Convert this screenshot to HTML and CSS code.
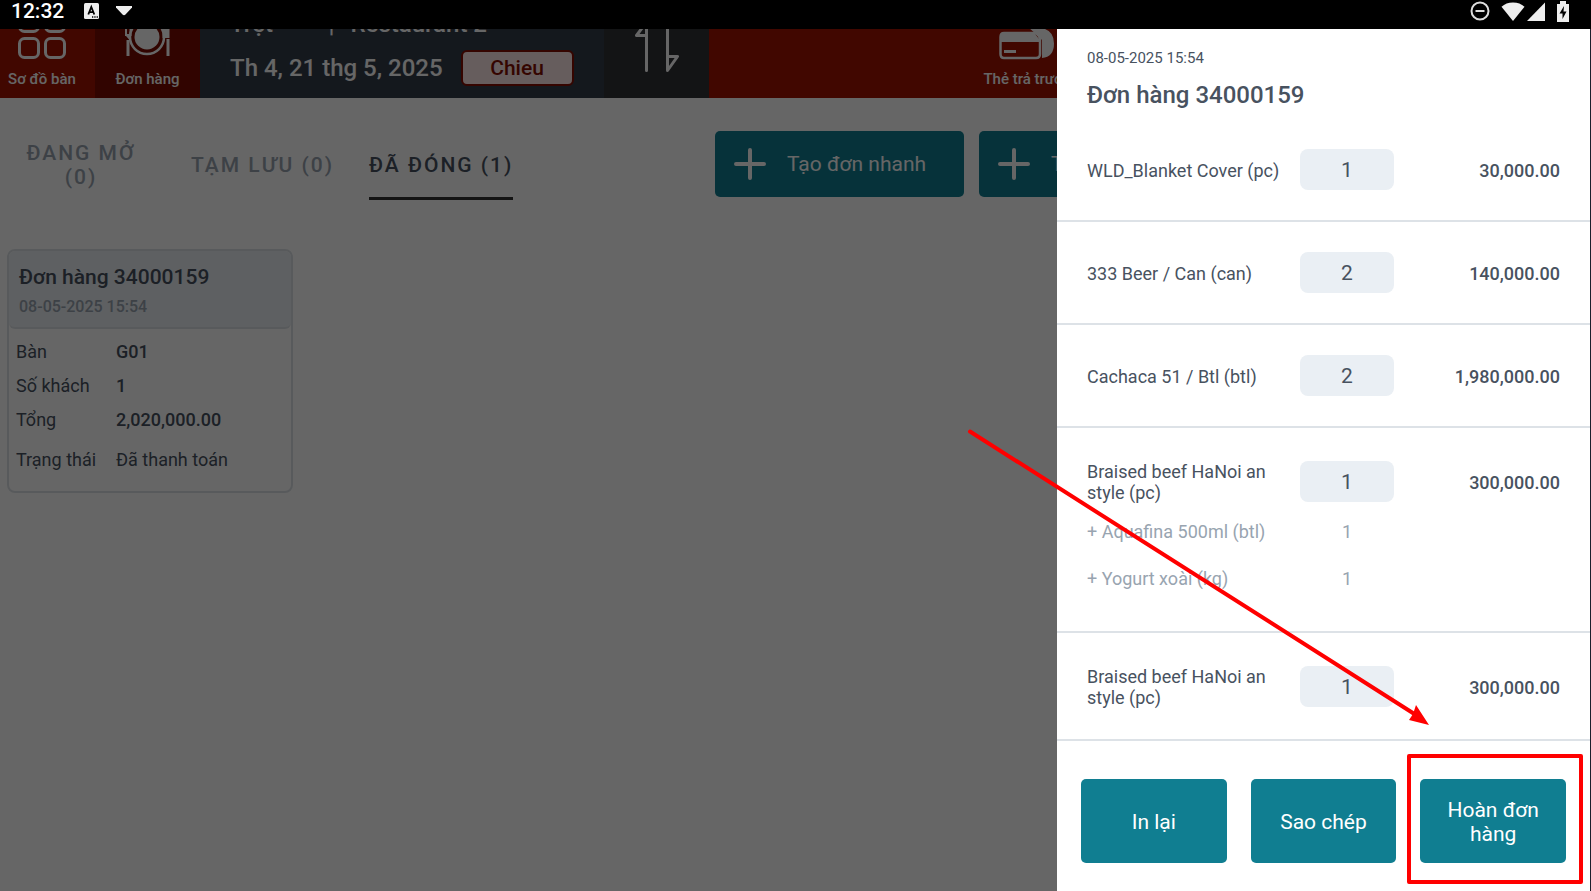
FILE: index.html
```html
<!DOCTYPE html>
<html lang="vi">
    <head>
        <meta charset="utf-8" />
        <title>Đơn hàng</title>
        <meta name="viewport" content="width=device-width, initial-scale=1">
        <link rel="stylesheet" href="styles.css">
    </head>
    <body>
        <div class="status-bar">
            <span class="clock">12:32</span>
            <svg class="status-a" width="15" height="16" viewBox="0 0 15 16">
                <rect width="15" height="16" rx="1.5" fill="#eee"/>
                <path d="M4.3 11.5L7.3 4l3 7.5M5.3 9.2h4" fill="none" stroke="#000" stroke-width="1.8"/>
                <path d="M8 14h1.3M10.3 14h1.3M12.6 14h1.3" stroke="#000" stroke-width="1.3"/>
            </svg>
            <svg width="16" height="10" viewBox="0 0 16 10"><path d="M0 0h16v1.5L9.5 8.5q-1.5 1.5-3 0L0 1.5z" fill="#eee"/></svg>
            <div class="status-right">
                <svg width="20" height="20" viewBox="0 0 20 20" fill="none" stroke="#ddd" stroke-width="2">
                    <circle cx="10" cy="10" r="8.5"/><path d="M5.5 10h9"/>
                </svg>
                <svg class="wifi" width="24" height="19" viewBox="0 0 24 19"><path d="M12 19L.5 4.800Q5 .5 12 .5t11.500 4.300z" fill="#eee"/></svg>
                <svg class="signal" width="18" height="19" viewBox="0 0 18 19"><path d="M0 19L18 .5V19z" fill="#eee"/></svg>
                <svg width="12" height="21" viewBox="0 0 12 21">
                    <path d="M0 3h3V0h6v3h3v18H0z" fill="#eee"/>
                    <path d="M7 5l-4.500 7.500h3V18L9.500 10.500h-3z" fill="#000"/>
                </svg>
            </div>
        </div>

        <div class="app">
            <header class="topbar">
                <button class="nav-item nav-tables">
                    <svg width="50" height="50" viewBox="0 0 50 50" fill="none" stroke="#fff" stroke-width="3">
                        <rect x="2.5" y="2.5" width="19" height="19" rx="5"/>
                        <rect x="28.5" y="2.5" width="19" height="19" rx="5"/>
                        <rect x="2.5" y="28.5" width="19" height="19" rx="5"/>
                        <rect x="28.5" y="28.5" width="19" height="19" rx="5"/>
                    </svg>
                    <span>Sơ đồ bàn</span>
                </button>
                <button class="nav-item nav-orders">
                    <svg width="46" height="50" viewBox="0 0 46 50">
                        <circle cx="22" cy="27" r="17" fill="none" stroke="#fff" stroke-width="2.5"/>
                        <circle cx="22" cy="27" r="12.5" fill="#fff"/>
                        <path d="M1 26h5v4h-1.500M1.500 30h3v16h-3zM41.500 29h3v17h-3zM37.500 8h7v20h-7z" fill="#fff"/>
                        <path d="M1 14v11h4.500V14" fill="none" stroke="#fff" stroke-width="2"/>
                    </svg>
                    <span>Đơn hàng</span>
                </button>
                <div class="session">
                    <div class="outlet"><span>Trệt</span><span class="divider">|</span><span>Restaurant 2</span></div>
                    <div class="shift">
                        <span>Th 4, 21 thg 5, 2025</span>
                        <button class="shift-button">Chieu</button>
                    </div>
                </div>
                <button class="nav-item nav-switch" aria-label="Đổi">
                    <svg width="44" height="60" viewBox="0 0 44 60" fill="none" stroke="#fff" stroke-width="3" stroke-linejoin="round" stroke-linecap="round">
                        <path d="M11.500 57.500V9L1.500 22.500h10M32.500 9v48.500L42.500 43.500h-10"/>
                    </svg>
                </button>
                <button class="nav-item nav-card">
                    <svg width="56" height="50" viewBox="0 0 56 50">
                        <path d="M30 18h12q13 2 13 15.500T43 48V30l-6-6z" fill="#fff"/>
                        <path d="M5 23h31q5 2 5 7v14q0 4-4 4H5q-3.500 0-3.500-4V27q0-4 3.500-4z" fill="none" stroke="#fff" stroke-width="2.5"/>
                        <path d="M2 24h34l5 6v2H2zM5 40h12v3H5z" fill="#fff"/>
                    </svg>
                    <span>Thẻ trả trước</span>
                </button>
            </header>

            <main>
                <div class="toolbar">
                    <nav class="tabs">
                        <button class="tab tab-open">ĐANG MỞ (0)</button>
                        <button class="tab">TẠM LƯU (0)</button>
                        <button class="tab active">ĐÃ ĐÓNG (1)</button>
                    </nav>
                    <button class="create">
                        <svg width="34" height="34" viewBox="0 0 34 34" stroke="#fff" stroke-width="4" stroke-linecap="round"><path d="M17 3v28M3 17h28"/></svg>
                        Tạo đơn nhanh
                    </button>
                    <button class="create">
                        <svg width="34" height="34" viewBox="0 0 34 34" stroke="#fff" stroke-width="4" stroke-linecap="round"><path d="M17 3v28M3 17h28"/></svg>
                        Tạo đơn
                    </button>
                </div>

                <article class="card">
                    <div class="card-head">
                        <h2>Đơn hàng 34000159</h2>
                        <time>08-05-2025 15:54</time>
                    </div>
                    <dl>
                        <dt>Bàn</dt><dd>G01</dd>
                        <dt>Số khách</dt><dd>1</dd>
                        <dt>Tổng</dt><dd>2,020,000.00</dd>
                        <dt class="state">Trạng thái</dt><dd class="state">Đã thanh toán</dd>
                    </dl>
                </article>
            </main>

            <div class="overlay">
                <aside class="panel">
                    <div class="panel-head">
                        <time>08-05-2025 15:54</time>
                        <h1>Đơn hàng 34000159</h1>
                    </div>
                    <table class="items">
                        <tbody>
                            <tr>
                                <td class="name">WLD_Blanket Cover (pc)</td>
                                <td class="qty"><span>1</span></td>
                                <td class="price">30,000.00</td>
                            </tr>
                        </tbody>
                        <tbody>
                            <tr>
                                <td class="name">333 Beer / Can (can)</td>
                                <td class="qty"><span>2</span></td>
                                <td class="price">140,000.00</td>
                            </tr>
                        </tbody>
                        <tbody>
                            <tr>
                                <td class="name">Cachaca 51 / Btl (btl)</td>
                                <td class="qty"><span>2</span></td>
                                <td class="price">1,980,000.00</td>
                            </tr>
                        </tbody>
                        <tbody>
                            <tr class="has-extras tall">
                                <td class="name">Braised beef HaNoi an style (pc)</td>
                                <td class="qty"><span>1</span></td>
                                <td class="price">300,000.00</td>
                            </tr>
                            <tr class="extra">
                                <td class="name">+ Aquafina 500ml (btl)</td>
                                <td class="qty">1</td>
                                <td></td>
                            </tr>
                            <tr class="extra">
                                <td class="name">+ Yogurt xoài (kg)</td>
                                <td class="qty">1</td>
                                <td></td>
                            </tr>
                        </tbody>
                        <tbody>
                            <tr class="tall">
                                <td class="name">Braised beef HaNoi an style (pc)</td>
                                <td class="qty"><span>1</span></td>
                                <td class="price">300,000.00</td>
                            </tr>
                        </tbody>
                    </table>
                    <div class="actions">
                        <button>In lại</button>
                        <button>Sao chép</button>
                        <div class="marked"><button>Hoàn đơn hàng</button></div>
                    </div>
                    <svg class="arrow" width="464" height="300" viewBox="0 0 464 300">
                        <path d="M3 3.500L449 287" stroke="#f00" stroke-width="4" stroke-linecap="round"/>
                        <path d="M462 297l-20-5 4-6 3-9z" fill="#f00"/>
                    </svg>
                </aside>
            </div>
        </div>
    </body>
</html>
```

FILE: styles.css
```css
* {
    box-sizing: border-box;
}

body {
    margin: 0;
    min-height: 100vh;
    display: flex;
    flex-direction: column;
    font-family: Roboto, sans-serif;
    font-size: 18px;
    color: #48525f;
    background: #fff;
    overflow: hidden;
}

button {
    font: inherit;
    color: inherit;
    border: 0;
    padding: 0;
    background: none;
    cursor: pointer;
}

h1, h2, dl, dd {
    margin: 0;
}

svg {
    display: block;
    flex: none;
}

/* status bar */
.status-bar {
    display: flex;
    height: 29px;
    padding: 0 22px 7px 11px;
    align-items: center;
    background: #000;
    color: #fff;
}

.clock {
    font-size: 21px;
    font-weight: 500;
}

.status-a {
    margin: 0 17px 0 20px;
}

.status-right {
    display: flex;
    align-items: center;
    margin-left: auto;
}

.wifi {
    margin: 0 2px 0 11px;
}

.signal {
    margin-right: 12px;
}

.app {
    position: relative;
    flex: 1;
}

/* top bar, scrolled partly under the status bar */
.topbar {
    display: flex;
    align-items: flex-end;
    height: 69px;
    overflow: hidden;
    background: #a31200;
    color: #fff;
    font-weight: 500;
}

.nav-item {
    display: flex;
    flex: none;
    flex-direction: column;
    align-items: center;
    justify-content: flex-end;
    gap: 10px;
    width: 105px;
    height: 100px;
    padding-bottom: 10px;
    font-size: 15px;
    font-weight: 500;
    line-height: 18px;
}

.nav-tables {
    width: 106px;
    margin-left: -11px;
}

.nav-orders {
    background: #7a0c00;
}

.nav-switch {
    padding-bottom: 25px;
    background: #303236;
}

.nav-card {
    width: 106px;
    margin-left: 265px;
}

.session {
    display: flex;
    flex: none;
    flex-direction: column;
    gap: 14px;
    width: 404px;
    padding: 0 30px 12px;
    font-size: 24px;
    background: #343c49;
}

.outlet {
    display: flex;
    width: 257px;
    line-height: 24px;
}

.outlet .divider {
    margin: 0 16px 0 auto;
}

.shift {
    display: flex;
    gap: 18px;
    align-items: center;
}

.shift-button {
    width: 113px;
    height: 36px;
    border: 2px solid #850d00;
    border-radius: 6px;
    background: #ffe9e9;
    color: #850d00;
    font-size: 21px;
    font-weight: 500;
}

/* orders */
.toolbar {
    display: flex;
    gap: 15px;
    padding: 33px 0 52px 6px;
}

.tabs {
    display: flex;
    gap: 35px;
    align-items: center;
    width: 694px;
}

.tab {
    height: 69px;
    margin-bottom: -3px;
    padding: 2px 0 0;
    border-bottom: 3px solid transparent;
    color: #98a4b0;
    font-size: 21px;
    font-weight: 500;
    line-height: 24px;
    letter-spacing: 2px;
    white-space: nowrap;
}

.tab-open {
    width: 150px;
    padding: 2px 15px 0;
    white-space: normal;
}

.tab.active {
    color: #48525f;
    border-color: #333;
}

.create {
    display: flex;
    flex: none;
    align-items: center;
    gap: 20px;
    width: 249px;
    height: 66px;
    padding-left: 18px;
    border-radius: 5px;
    background: #107e91;
    color: #fff;
    font-size: 21px;
}

.card {
    width: 286px;
    margin-left: 7px;
    border: 2px solid #dde2e7;
    border-radius: 8px;
}

.card-head {
    padding: 13px 10px 10px;
    border-bottom: 2px solid #dde2e7;
    border-radius: 6px;
    background: #ebf0f4;
}

.card h2 {
    font-size: 21px;
    font-weight: 500;
    line-height: 26px;
}

.card time {
    display: block;
    padding-top: 7px;
    font-size: 16px;
    font-weight: 500;
    line-height: 20px;
    color: #98a4b0;
}

.card dl {
    display: grid;
    grid-template-columns: 100px 1fr;
    padding: 6px 7px 14px;
    line-height: 34px;
}

.card dd {
    font-weight: 500;
}

.card .state {
    padding-top: 6px;
    font-weight: 400;
}

/* order detail */
.overlay {
    position: absolute;
    inset: 0;
    display: flex;
    justify-content: flex-end;
    background: rgba(0, 0, 0, 0.6);
}

.panel {
    position: relative;
    display: flex;
    flex-direction: column;
    width: 534px;
    border-right: 1px solid #1a1f2b;
    background: #fff;
}

.panel-head {
    padding: 18px 30px 9px;
}

.panel-head time {
    display: block;
    font-size: 15px;
    line-height: 22px;
}

.panel-head h1 {
    padding-top: 11px;
    font-size: 24px;
    font-weight: 500;
    line-height: 30px;
}

.items {
    width: 100%;
    border-spacing: 0;
    table-layout: fixed;
    line-height: 21px;
}

.items td {
    height: 103px;
    padding: 0;
    border-bottom: 2px solid #dde2e7;
}

.items .name {
    width: 243px;
    padding: 2px 20px 0 30px;
}

.items .qty {
    width: 94px;
    text-align: center;
}

.qty span {
    display: block;
    padding-top: 2px;
    border-radius: 8px;
    background: #eaeff4;
    font-size: 21px;
    line-height: 39px;
}

.items .price {
    padding: 2px 30px 0 0;
    text-align: right;
    font-weight: 500;
}

.items .tall td {
    height: 108px;
}

.items .has-extras td {
    height: 80px;
    padding-top: 26px;
    border-bottom: 0;
}

.items .has-extras .name,
.items .has-extras .price {
    padding-top: 28px;
}

.items .extra td {
    height: 47px;
    padding-top: 0;
    border-bottom: 0;
    color: #98a4b0;
}

.items .extra:last-child td {
    height: 78px;
    padding-bottom: 29px;
    border-bottom: 2px solid #dde2e7;
}

.actions {
    display: grid;
    grid-template-columns: repeat(3, 1fr);
    gap: 24px;
    margin-top: auto;
    padding: 38px 24px 28px;
}

.actions button {
    width: 100%;
    height: 84px;
    padding: 2px 20px 0;
    border-radius: 5px;
    background: #107e91;
    color: #fff;
    font-size: 21px;
    line-height: 24px;
}

.marked {
    position: relative;
}

.marked::after {
    content: "";
    position: absolute;
    inset: -25px -17px -21px -13px;
    border: 4px solid #f00;
    border-radius: 2px;
    pointer-events: none;
}

.arrow {
    position: absolute;
    top: 399px;
    left: -90px;
    pointer-events: none;
}
```
